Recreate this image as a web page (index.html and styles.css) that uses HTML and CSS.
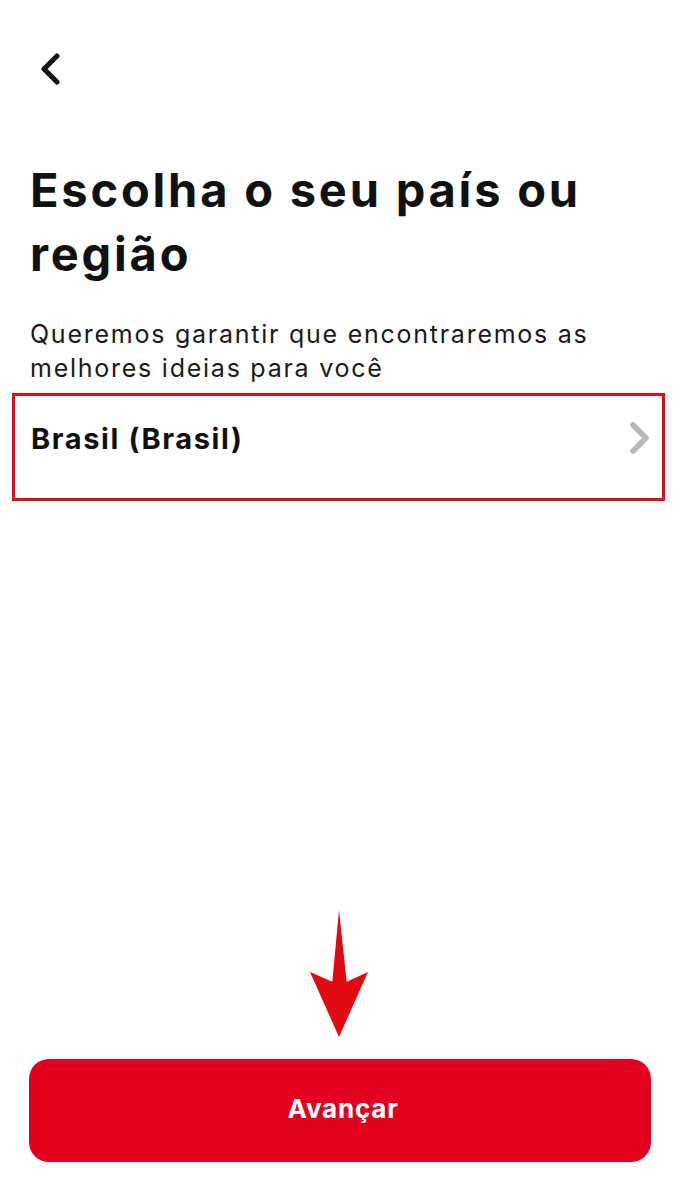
FILE: index.html
```html
<!DOCTYPE html>
<html lang="pt-BR">
<head>
    <meta charset="UTF-8">
    <meta name="viewport" content="width=device-width, initial-scale=1.0">
    <title>Escolha o seu país ou região</title>
    <link rel="stylesheet" href="styles.css">
</head>
<body>
    <div class="page">
        <div class="top">
            <button class="back" aria-label="Voltar">
                <svg width="24" height="32" viewBox="0 0 24 32">
                    <path d="M19 3 L6 16 L19 29" fill="none" stroke="#111" stroke-width="5" stroke-linecap="round" stroke-linejoin="round"/>
                </svg>
            </button>
            <h1>Escolha o seu país ou região</h1>
            <p class="subtitle">Queremos garantir que encontraremos as melhores ideias para você</p>
        </div>

        <div class="country">
            <span class="country-name">Brasil (Brasil)</span>
            <svg class="chevron" width="22" height="34" viewBox="0 0 22 34">
                <path d="M4 4 L17 17 L4 30" fill="none" stroke="#b8b8b8" stroke-width="5.5" stroke-linecap="round" stroke-linejoin="round"/>
            </svg>
        </div>

        <div class="footer">
            <svg class="arrow" width="58" height="127" viewBox="0 0 58 127">
                <polygon points="29,0 36.7,71.7 58,62 29,127 0,62 22.3,71.7" fill="#e20a12"/>
            </svg>
            <button class="next">Avançar</button>
        </div>
    </div>
</body>
</html>
```

FILE: styles.css
```css
body {
    font-family: Inter, "Noto Sans", sans-serif;
    background-color: #fff;
    color: #111;
    margin: 0;
    padding: 0;
}
.page {
    min-height: 1200px;
    display: flex;
    flex-direction: column;
}
.top {
    padding: 0 30px;
}
.back {
    display: block;
    margin: 53px 0 0 8px;
    padding: 0;
    border: none;
    background: none;
    width: 24px;
    height: 32px;
}
.back svg {
    display: block;
}
h1 {
    font-size: 47px;
    line-height: 64px;
    font-weight: 700;
    letter-spacing: 2.8px;
    margin: 73px 0 0;
}
.subtitle {
    font-size: 25px;
    line-height: 34px;
    letter-spacing: 1.75px;
    margin: 31px 0 0;
    color: #1a1a1a;
}
.country {
    margin: 8px 11px 0 12px;
    height: 102px;
    border: 3px solid #d8121b;
    padding: 0 11px 0 16px;
    display: flex;
    align-items: flex-start;
    justify-content: space-between;
}
.country-name {
    font-size: 29px;
    font-weight: 700;
    line-height: 40px;
    letter-spacing: 1.6px;
    margin-top: 23px;
}
.chevron {
    margin-top: 25px;
}
.footer {
    margin-top: auto;
    padding: 0 25px 38px 29px;
    display: flex;
    flex-direction: column;
    align-items: center;
}
.arrow {
    display: block;
    margin: 0 0 22px -2px;
}
.next {
    width: 100%;
    height: 103px;
    border: none;
    border-radius: 20px;
    background-color: #e3001f;
    color: #fff;
    font-family: Inter, "Noto Sans", sans-serif;
    font-size: 26px;
    font-weight: 700;
    letter-spacing: 0.8px;
    padding: 0 0 4px 6px;
}
```
